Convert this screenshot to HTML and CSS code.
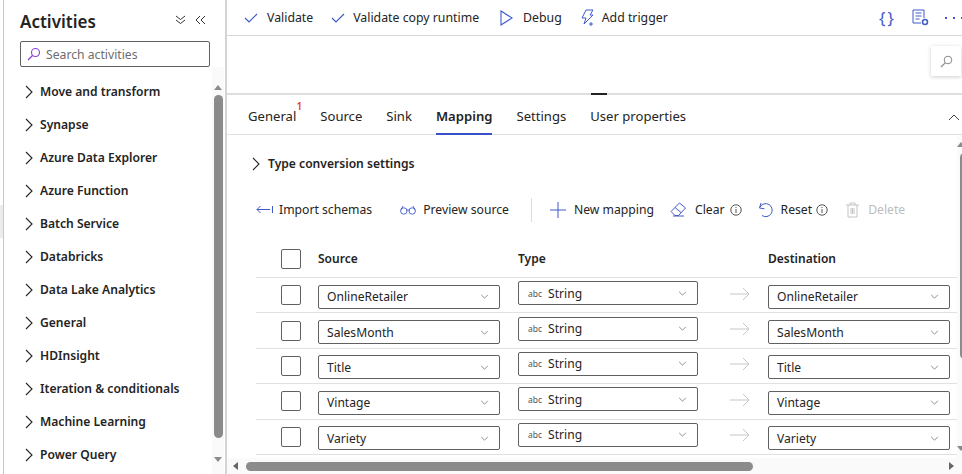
FILE: index.html
```html
<!DOCTYPE html>
<html lang="en">
<head>
  <meta charset="UTF-8" />
  <title>Copy data mapping</title>
  <link rel="stylesheet" href="styles.css">
</head>
<body>
  <svg class="sprites" width="0" height="0">
    <symbol id="chev-right" viewBox="0 0 10 14"><path d="M2 1l6 6-6 6" fill="none" stroke="currentColor" stroke-width="1.1"/></symbol>
    <symbol id="chev-down" viewBox="0 0 10 6"><path d="M1 1l4 4 4-4" fill="none" stroke="currentColor" stroke-width="1"/></symbol>
    <symbol id="check" viewBox="0 0 14 10"><path d="M1 5l4 4 8-8" fill="none" stroke="currentColor" stroke-width="1.2"/></symbol>
    <symbol id="arrow" viewBox="0 0 20 14"><path d="M0 7h19M13 1l6 6-6 6" fill="none" stroke="currentColor" stroke-width="1"/></symbol>
    <symbol id="info" viewBox="0 0 12 12"><circle cx="6" cy="6" r="5.200" fill="none" stroke="currentColor"/><path d="M6 5v4M6 3v1" stroke="currentColor"/></symbol>
  </svg>

  <div class="edge"><div class="edge-tab"></div></div>

  <aside class="sidebar">
    <div class="side-head">
      <h1>Activities</h1>
      <svg class="side-icon" width="11" height="10" viewBox="0 0 11 10"><path d="M1 1l4.500 3.500L10 1M1 5l4.500 3.500L10 5" fill="none" stroke="#333" /></svg>
      <svg class="side-icon" width="11" height="10" viewBox="0 0 11 10"><path d="M5 1L1 5l4 4M10 1L6 5l4 4" fill="none" stroke="#333" /></svg>
    </div>
    <div class="search-box">
      <svg width="14" height="14" viewBox="0 0 14 14"><circle cx="8.500" cy="5.500" r="4" fill="none" stroke="#8a3fd1" stroke-width="1.100"/><path d="M5.500 8.500L1 13" stroke="#8a3fd1" stroke-width="1.300"/></svg>
      <span class="search-text">Search activities</span>
    </div>
    <div class="side-body">
      <ul class="activity-list">
        <li><svg width="10" height="14"><use href="#chev-right"/></svg>Move and transform</li>
        <li><svg width="10" height="14"><use href="#chev-right"/></svg>Synapse</li>
        <li><svg width="10" height="14"><use href="#chev-right"/></svg>Azure Data Explorer</li>
        <li><svg width="10" height="14"><use href="#chev-right"/></svg>Azure Function</li>
        <li><svg width="10" height="14"><use href="#chev-right"/></svg>Batch Service</li>
        <li><svg width="10" height="14"><use href="#chev-right"/></svg>Databricks</li>
        <li><svg width="10" height="14"><use href="#chev-right"/></svg>Data Lake Analytics</li>
        <li><svg width="10" height="14"><use href="#chev-right"/></svg>General</li>
        <li><svg width="10" height="14"><use href="#chev-right"/></svg>HDInsight</li>
        <li><svg width="10" height="14"><use href="#chev-right"/></svg>Iteration &amp; conditionals</li>
        <li><svg width="10" height="14"><use href="#chev-right"/></svg>Machine Learning</li>
        <li><svg width="10" height="14"><use href="#chev-right"/></svg>Power Query</li>
      </ul>
      <div class="vscroll">
        <span class="tri tri-up"></span>
        <div class="vthumb"></div>
        <span class="tri tri-down"></span>
      </div>
    </div>
  </aside>

  <main class="main">
    <div class="toolbar">
      <span class="tool"><svg class="blue" width="14" height="10"><use href="#check"/></svg>Validate</span>
      <span class="tool tool-copy"><svg class="blue" width="14" height="10"><use href="#check"/></svg>Validate copy runtime</span>
      <span class="tool tool-debug"><svg width="13" height="16" viewBox="0 0 13 16"><path d="M1 1l11 7-11 7z" fill="none" stroke="#3f5bc8" stroke-width="1.100"/></svg>Debug</span>
      <span class="tool tool-trigger"><svg width="16" height="18" viewBox="0 0 16 18"><path d="M6 1h7l-3 5h3L4 15l2-6H2zM11 13v4M9 15h4" fill="none" stroke="#3f5bc8"/></svg>Add trigger</span>
      <span class="tool-right">
        <span class="braces">{}</span>
        <svg width="17" height="17" viewBox="0 0 17 17"><path d="M9 14H1V1h11v8M3.500 4h6M3.500 7h6M3.500 10h4" fill="none" stroke="#3f5bc8"/><circle cx="13" cy="13" r="2.500" fill="none" stroke="#3f5bc8" stroke-width="1.500"/></svg>
        <span class="dots"><i></i><i></i><i></i></span>
      </span>
    </div>

    <div class="canvas">
      <div class="zoom-btn">
        <svg width="13" height="13" viewBox="0 0 13 13"><circle cx="8" cy="5" r="3.800" fill="none" stroke="#8a8a8a"/><path d="M5.200 7.800L1 12" stroke="#8a8a8a" stroke-width="1.200"/></svg>
      </div>
    </div>

    <div class="splitter"><span class="handle"></span></div>

    <div class="tabs">
      <span class="tab">General<sup class="badge">1</sup></span>
      <span class="tab">Source</span>
      <span class="tab">Sink</span>
      <span class="tab active">Mapping</span>
      <span class="tab">Settings</span>
      <span class="tab">User properties</span>
      <svg class="collapse" width="12" height="7" viewBox="0 0 12 7"><path d="M1 6l5-5 5 5" fill="none" stroke="#444"/></svg>
    </div>

    <div class="panel">
      <div class="panel-content">
        <div class="type-settings"><svg width="10" height="14"><use href="#chev-right"/></svg>Type conversion settings</div>

        <div class="commands">
          <span class="cmd import"><svg width="18" height="9" viewBox="0 0 18 9"><path d="M16.500 1v7M14 4.500H1M4.500 1L1 4.500 4.500 8" fill="none" stroke="#3f5bc8"/></svg>Import schemas</span>
          <span class="cmd preview"><svg width="16" height="10" viewBox="0 0 16 10"><circle cx="3.800" cy="6" r="3.200" fill="none" stroke="#3f5bc8" stroke-width=".9"/><circle cx="12.200" cy="6" r="3.200" fill="none" stroke="#3f5bc8" stroke-width=".9"/><path d="M6.500 5.500c1-.8 2-.8 3 0M1 5l2-4M15 5l-2-4" fill="none" stroke="#3f5bc8" stroke-width=".9"/></svg>Preview source</span>
          <span class="cmd-sep"></span>
          <span class="cmd newmap"><svg width="16" height="16" viewBox="0 0 16 16"><path d="M8 0v16M0 8h16" stroke="#3f5bc8"/></svg>New mapping</span>
          <span class="cmd clear"><svg width="17" height="15" viewBox="0 0 17 15"><path d="M1 9.500L9.500 1l6 5-7 7.500H5zM5 5.500l6 5M3 14h11" fill="none" stroke="#3f5bc8"/></svg>Clear<svg class="info" width="12" height="12"><use href="#info"/></svg></span>
          <span class="cmd reset"><svg width="16" height="16" viewBox="0 0 16 16"><path d="M3 1L1.500 6l5 .8M2 5A6.500 6.500 0 1 1 4 13.500" fill="none" stroke="#3f5bc8"/></svg>Reset<svg class="info" width="12" height="12"><use href="#info"/></svg></span>
          <span class="cmd disabled"><svg width="13" height="16" viewBox="0 0 13 16"><path d="M0 3h13M4 3V1h5v2M2 3v12h9V3M5 6v6M6.500 6v6M8 6v6" fill="none" stroke="#c4c4c4"/></svg>Delete</span>
        </div>

        <div class="map-table">
          <div class="map-row map-head">
            <span class="box"></span>
            <span class="col-source">Source</span>
            <span class="col-type">Type</span>
            <span class="col-arrow"></span>
            <span class="col-dest">Destination</span>
          </div>
          <div class="map-row">
            <span class="box"></span>
            <span class="col-source select"><span>OnlineRetailer</span><svg width="9" height="5"><use href="#chev-down"/></svg></span>
            <span class="col-type select"><small>abc</small><span>String</span><svg width="9" height="5"><use href="#chev-down"/></svg></span>
            <span class="col-arrow"><svg width="20" height="14"><use href="#arrow"/></svg></span>
            <span class="col-dest select"><span>OnlineRetailer</span><svg width="9" height="5"><use href="#chev-down"/></svg></span>
          </div>
          <div class="map-row">
            <span class="box"></span>
            <span class="col-source select"><span>SalesMonth</span><svg width="9" height="5"><use href="#chev-down"/></svg></span>
            <span class="col-type select"><small>abc</small><span>String</span><svg width="9" height="5"><use href="#chev-down"/></svg></span>
            <span class="col-arrow"><svg width="20" height="14"><use href="#arrow"/></svg></span>
            <span class="col-dest select"><span>SalesMonth</span><svg width="9" height="5"><use href="#chev-down"/></svg></span>
          </div>
          <div class="map-row">
            <span class="box"></span>
            <span class="col-source select"><span>Title</span><svg width="9" height="5"><use href="#chev-down"/></svg></span>
            <span class="col-type select"><small>abc</small><span>String</span><svg width="9" height="5"><use href="#chev-down"/></svg></span>
            <span class="col-arrow"><svg width="20" height="14"><use href="#arrow"/></svg></span>
            <span class="col-dest select"><span>Title</span><svg width="9" height="5"><use href="#chev-down"/></svg></span>
          </div>
          <div class="map-row">
            <span class="box"></span>
            <span class="col-source select"><span>Vintage</span><svg width="9" height="5"><use href="#chev-down"/></svg></span>
            <span class="col-type select"><small>abc</small><span>String</span><svg width="9" height="5"><use href="#chev-down"/></svg></span>
            <span class="col-arrow"><svg width="20" height="14"><use href="#arrow"/></svg></span>
            <span class="col-dest select"><span>Vintage</span><svg width="9" height="5"><use href="#chev-down"/></svg></span>
          </div>
          <div class="map-row">
            <span class="box"></span>
            <span class="col-source select"><span>Variety</span><svg width="9" height="5"><use href="#chev-down"/></svg></span>
            <span class="col-type select"><small>abc</small><span>String</span><svg width="9" height="5"><use href="#chev-down"/></svg></span>
            <span class="col-arrow"><svg width="20" height="14"><use href="#arrow"/></svg></span>
            <span class="col-dest select"><span>Variety</span><svg width="9" height="5"><use href="#chev-down"/></svg></span>
          </div>
        </div>
      </div>
      <div class="panel-scroll">
        <span class="tri tri-up"></span>
        <div class="panel-thumb"></div>
        <span class="tri tri-down"></span>
      </div>
    </div>

    <div class="hscroll">
      <span class="tri tri-left"></span>
      <div class="hthumb"></div>
      <span class="tri tri-right"></span>
    </div>
  </main>
</body>
</html>
```

FILE: styles.css
```css
:root {
  --text-color: #242424;
  --line-color: #e1e1e1;
  --border-color: #606060;
  --thumb-color: #8b8b8b;
}

* {
  box-sizing: border-box;
}

html, body {
  height: 474px;
}

body {
  margin: 0;
  display: flex;
  overflow: hidden;
  background-color: #fff;
  color: var(--text-color);
  font-family: 'Noto Sans', sans-serif;
  font-size: 12.2px;
}

.sprites {
  position: absolute;
}

.edge {
  width: 4px;
  flex: none;
  padding-top: 205px;
  border-right: 1px solid #c8c8c8;
}

.edge-tab {
  width: 3px;
  height: 33px;
  background-color: #ececec;
}

/* activities panel */
.sidebar {
  width: 223px;
  flex: none;
  display: flex;
  flex-direction: column;
  padding-left: 16px;
  border-right: 2px solid #d4d4d4;
}

.side-head {
  height: 41px;
  display: flex;
  align-items: center;
  gap: 9px;
  padding: 2px 19px 0 0;
}

.side-head h1 {
  margin: 0 auto 0 0;
  font-size: 17px;
  font-weight: 600;
}

.side-icon {
  margin-top: -4px;
}

.search-box {
  width: 190px;
  height: 26px;
  display: flex;
  align-items: center;
  gap: 5px;
  padding-left: 6px;
  border: 1px solid var(--border-color);
  border-radius: 2px;
  color: #6d6d6d;
}

.search-text {
  padding-top: 1px;
}

.side-body {
  flex: 1;
  min-height: 0;
  display: flex;
  overflow: hidden;
}

.activity-list {
  flex: 1;
  margin: 0;
  padding: 8px 0 0 4px;
  list-style: none;
}

.activity-list li {
  height: 33px;
  display: flex;
  align-items: center;
  gap: 6px;
  font-weight: 600;
  font-size: 12.100px;
  white-space: nowrap;
}

.vscroll {
  width: 12px;
  margin-right: 1px;
  padding-top: 18px;
  display: flex;
  flex-direction: column;
  align-items: center;
  gap: 5px;
  background-color: #fafafa;
}

.vthumb {
  width: 9px;
  height: 343px;
  border-radius: 5px;
  background-color: var(--thumb-color);
}

.tri {
  display: block;
  flex: none;
  width: 0;
  height: 0;
  border: 4px solid transparent;
}

.tri-up {
  border-top: 0;
  border-bottom: 5px solid #8b8b8b;
}

.tri-down {
  margin-top: 14px;
  border-bottom: 0;
  border-top: 5px solid #8b8b8b;
}

.tri-left {
  border-left: 0;
  border-right: 5px solid #666;
}

.tri-right {
  margin-left: auto;
  border-right: 0;
  border-left: 5px solid #666;
}

/* right side */
.main {
  flex: 1;
  min-width: 0;
  display: flex;
  flex-direction: column;
}

.toolbar {
  height: 36px;
  flex: none;
  display: flex;
  align-items: center;
  gap: 18px;
  padding: 0 0 0 17px;
  border-bottom: 1px solid #d8d8d8;
  font-size: 12.300px;
}

.tool {
  display: flex;
  align-items: center;
  gap: 9px;
}

.tool-copy {
  gap: 8px;
}

.tool-debug {
  margin-left: 3px;
  gap: 10px;
}

.tool-trigger {
  gap: 6px;
}

.blue {
  color: #3f5bc8;
}

.tool-right {
  margin-left: auto;
  display: flex;
  align-items: center;
  gap: 16px;
  color: #3f5bc8;
}

.braces {
  font-size: 17px;
  letter-spacing: 2px;
}

.dots {
  display: flex;
  gap: 6px;
  margin-right: -1px;
  width: 18px;
  flex: none;
}

.dots i {
  width: 2px;
  height: 2px;
  flex: none;
  background-color: #3f5bc8;
}

.canvas {
  height: 57px;
  flex: none;
  display: flex;
  justify-content: flex-end;
  padding-top: 10px;
}

.zoom-btn {
  width: 30px;
  height: 30px;
  display: flex;
  align-items: center;
  justify-content: center;
  margin-right: 1px;
  background-color: #fff;
  box-shadow: 0 1px 4px rgba(0, 0, 0, 0.2);
}

.splitter {
  height: 2px;
  flex: none;
  padding-left: 364px;
  background-color: #dedede;
}

.handle {
  display: block;
  width: 16px;
  height: 2px;
  background-color: #222;
}

.tabs {
  height: 40px;
  flex: none;
  display: flex;
  align-items: stretch;
  gap: 24px;
  padding: 0 2px 0 21px;
  border-bottom: 1px solid var(--line-color);
  font-size: 13.100px;
}

.tab {
  display: flex;
  align-items: center;
  position: relative;
  border-bottom: 2px solid transparent;
  margin-bottom: -1px;
  padding-top: 4px;
}

.tab.active {
  font-weight: 600;
  border-bottom-color: #3651c9;
}

.badge {
  position: absolute;
  top: 5px;
  right: -6px;
  color: #e8392c;
  font-size: 10px;
  font-weight: 600;
  line-height: 12px;
}

.collapse {
  margin: 19px 0 0 auto;
}

.panel {
  flex: 1;
  min-height: 0;
  display: flex;
  overflow: hidden;
}

.panel-content {
  flex: 1;
  min-width: 0;
  padding-left: 29px;
}

.panel-scroll {
  width: 5px;
  flex: none;
  padding: 7px 0 0 0;
  overflow: hidden;
  background-color: #fafafa;
}

.panel-thumb {
  width: 9px;
  height: 206px;
  margin: 6px 0 0 3px;
  border-radius: 5px;
  background-color: var(--thumb-color);
}

.panel-scroll .tri-down {
  margin-top: 87px;
}

.type-settings {
  height: 57px;
  display: flex;
  align-items: center;
  gap: 7px;
  margin-left: -5px;
  font-weight: 600;
  font-size: 12.100px;
}

.commands {
  height: 35px;
  display: flex;
  align-items: center;
  font-size: 12.200px;
}

.cmd {
  display: flex;
  align-items: center;
  gap: 6px;
  white-space: nowrap;
}

.import {
  gap: 5px;
  margin-right: 28px;
}

.preview {
  margin-right: 22px;
  gap: 7px;
}

.cmd-sep {
  width: 1px;
  height: 24px;
  margin-right: 18px;
  background-color: #dcdcdc;
}

.newmap {
  margin-right: 16px;
  gap: 8px;
}

.clear {
  margin-right: 16px;
  gap: 8px;
}

.reset {
  margin-right: 18px;
  gap: 7px;
}

.info {
  margin-left: -3px;
  color: #555;
}

.disabled {
  gap: 9px;
  color: #bdbdbd;
}

.map-table {
  padding-top: 13px;
}

.map-row {
  height: 35.400px;
  display: flex;
  align-items: center;
  padding-left: 25px;
  border-bottom: 1px solid var(--line-color);
  width: 701px;
}

.map-head {
  height: 38px;
  font-weight: 600;
  font-size: 12px;
}

.box {
  width: 20px;
  height: 20px;
  flex: none;
  margin-right: 17px;
  border: 1px solid var(--border-color);
  border-radius: 2px;
}

.col-source {
  width: 182px;
  flex: none;
  margin-right: 18px;
}

.col-type {
  width: 180px;
  flex: none;
  margin-right: 32px;
}

.col-arrow {
  width: 20px;
  flex: none;
  margin-right: 18px;
  display: flex;
  color: #c6c6c6;
}

.col-dest {
  width: 182px;
  flex: none;
}

.select {
  height: 24px;
  display: flex;
  align-items: center;
  padding: 0 10px 0 8px;
  border: 1px solid var(--border-color);
  border-radius: 2px;
  font-size: 12.100px;
}

.select svg {
  margin-left: auto;
  color: #777;
}

.select small {
  font-size: 8.500px;
  margin-right: 6px;
  margin-left: 1px;
  color: #555;
}

.col-source.select,
.col-dest.select {
  margin-top: 3px;
}

.col-type.select {
  margin-top: -4px;
}

.col-arrow svg {
  margin-top: -3px;
}

.hscroll {
  height: 16px;
  flex: none;
  display: flex;
  align-items: center;
  padding: 0 8px 0 6px;
  background-color: #fafafa;
}

.hthumb {
  width: 507px;
  height: 9px;
  margin-left: 8px;
  border-radius: 5px;
  background-color: var(--thumb-color);
}
```
